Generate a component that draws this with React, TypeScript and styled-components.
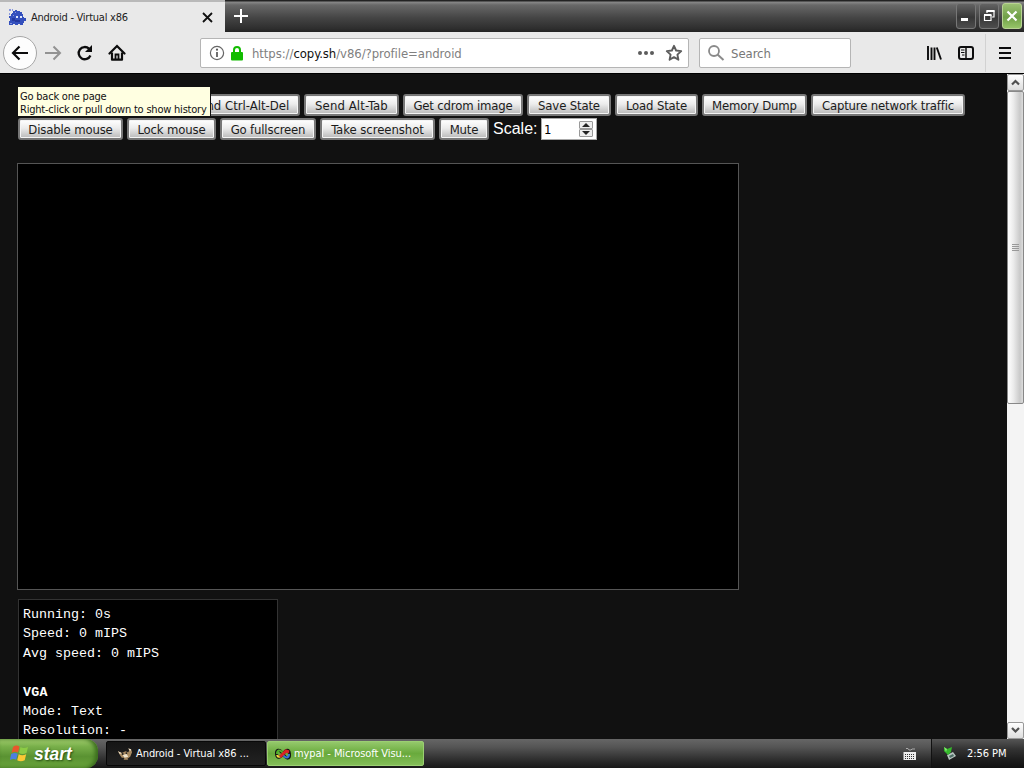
import React, { ReactElement, ReactNode } from "react";
import styled, { createGlobalStyle } from "styled-components";

const UI_FONT = '"DejaVu Sans Condensed", "DejaVu Sans", "Noto Sans", sans-serif';

interface ActionButton {
  label: string;
  width: number;
  tracking?: number;
}

const KEY_ACTIONS: readonly ActionButton[] = [
  { label: "Send Ctrl-Alt-Del", width: 119, tracking: 0 },
  { label: "Send Alt-Tab", width: 95, tracking: 0.1 },
  { label: "Get cdrom image", width: 120 },
  { label: "Save State", width: 84 },
  { label: "Load State", width: 83 },
  { label: "Memory Dump", width: 105 },
  { label: "Capture network traffic", width: 154 },
];

const SCREEN_ACTIONS: readonly ActionButton[] = [
  { label: "Disable mouse", width: 105 },
  { label: "Lock mouse", width: 89 },
  { label: "Go fullscreen", width: 96 },
  { label: "Take screenshot", width: 115, tracking: -0.05 },
  { label: "Mute", width: 50 },
];

const TitleBar = (): ReactElement => (
  <TitleBarContainer>
    <Tab>
      <FaviconIcon />
      <TabTitle>Android - Virtual x86</TabTitle>
      <svg width="11" height="11" viewBox="0 0 11 11">
        <path d="M1 1l9 9M10 1l-9 9" stroke="#111" strokeWidth="1.8" />
      </svg>
    </Tab>
    <NewTab>
      <svg width="14" height="14" viewBox="0 0 14 14">
        <path d="M7 0v14M0 7h14" stroke="#fff" strokeWidth="2" />
      </svg>
    </NewTab>
    <WindowControls>
      <WindowButton>
        <svg width="18" height="24" viewBox="0 0 18 24">
          <path d="M4 15.500h7" stroke="#fff" strokeWidth="3" />
        </svg>
      </WindowButton>
      <WindowButton>
        <svg width="18" height="24" viewBox="0 0 18 24" fill="none">
          <path d="M7 9V7h7v6h-2" stroke="#fff" strokeWidth="1.2" />
          <path d="M6.500 7h8" stroke="#fff" strokeWidth="2" />
          <path d="M4.500 11.500h6.500v5H4.500z" stroke="#fff" strokeWidth="1.2" />
          <path d="M4 11h7.500" stroke="#fff" strokeWidth="2" />
        </svg>
      </WindowButton>
      <WindowButton $close>
        <svg width="18" height="24" viewBox="0 0 18 24">
          <path
            d="M4.500 7.500l9 9M13.500 7.500l-9 9"
            stroke="#fff"
            strokeWidth="2.2"
          />
        </svg>
      </WindowButton>
    </WindowControls>
  </TitleBarContainer>
);

const FaviconIcon = (): ReactElement => (
  <svg width="17" height="17" viewBox="0 0 17 17">
    <path
      d="M3 4h1V2h2V1h2v1h3v1h2v2h1v3h1v1h2v3h-2v2h-1v2h-3v-1H9v1H6v-1H4v1H0v-4h1V9H0V7h2V5h1z"
      fill="#3450bd"
    />
    <path
      d="M0 0h2v2H0zM3 0h1v2H3zM0 4h1v2H0zM1 14h2v1H1zM6 3h1v1H6zM4 6h1v1H4z"
      fill="#8797df"
    />
    <path d="M3 9h3v3H3zM6 11h5v2H6z" fill="#2439a0" />
    <path d="M7 7h2v2H7zM11 7h2v2h-2z" fill="#dfe8ff" />
  </svg>
);

const BrowserToolbar = (): ReactElement => (
  <ToolbarContainer>
    <BackButton>
      <svg width="18" height="16" viewBox="0 0 18 16" fill="none">
        <path
          d="M17 8H2M8.500 1.500L2 8l6.500 6.500"
          stroke="#0c0c0d"
          strokeWidth="2.2"
        />
      </svg>
    </BackButton>
    <NavButton>
      <svg width="18" height="16" viewBox="0 0 18 16" fill="none">
        <path
          d="M1 8h15M9.500 1.500L16 8l-6.500 6.500"
          stroke="#929292"
          strokeWidth="2"
        />
      </svg>
    </NavButton>
    <NavButton>
      <svg width="18" height="18" viewBox="0 0 18 18" fill="none">
        <path
          d="M14.400 11.500A6.100 6.100 0 1 1 13 4.700"
          stroke="#0c0c0d"
          strokeWidth="2.3"
        />
        <path d="M16 1v7H9z" fill="#0c0c0d" />
      </svg>
    </NavButton>
    <NavButton>
      <svg width="18" height="18" viewBox="0 0 18 18" fill="none">
        <path
          d="M1.500 9.500L9 2l7.500 7.500"
          stroke="#0c0c0d"
          strokeWidth="2.200"
          strokeLinecap="round"
        />
        <path
          d="M4 8.500v7.200h10V8.500"
          stroke="#0c0c0d"
          strokeWidth="2.200"
          strokeLinejoin="round"
        />
        <path d="M7.500 16v-5.500h3V16" stroke="#0c0c0d" strokeWidth="1.8" />
      </svg>
    </NavButton>
    <AddressBar>
      <svg width="16" height="16" viewBox="0 0 16 16" fill="none">
        <circle cx="8" cy="8" r="6.600" stroke="#666" strokeWidth="1.200" />
        <path d="M8 7v5" stroke="#555" strokeWidth="1.700" />
        <circle cx="8" cy="4.700" r="1.100" fill="#555" />
      </svg>
      <LockIcon width="12" height="15" viewBox="0 0 12 15">
        <path
          d="M3 7V4a3 3 0 0 1 6 0v3"
          fill="none"
          stroke="#12bc00"
          strokeWidth="2"
        />
        <rect y="6" width="12" height="8.500" rx="1" fill="#12bc00" />
      </LockIcon>
      <Url>
        https://<strong>copy.sh</strong>/v86/?profile=android
      </Url>
      <svg width="18" height="6" viewBox="0 0 18 6" fill="#5c5c5c">
        <circle cx="3" cy="3" r="2" />
        <circle cx="9" cy="3" r="2" />
        <circle cx="15" cy="3" r="2" />
      </svg>
      <StarIcon width="18" height="18" viewBox="0 0 18 18" fill="none">
        <path
          d="M9 1.800l2.100 4.700 5.100.6-3.800 3.500 1 5.100L9 13.200l-4.400 2.500 1-5.100L1.800 7.100l5.100-.6z"
          stroke="#5c5c5c"
          strokeWidth="1.900"
          strokeLinejoin="round"
        />
      </StarIcon>
    </AddressBar>
    <SearchBar>
      <svg width="18" height="18" viewBox="0 0 18 18" fill="none">
        <circle cx="7" cy="7" r="5" stroke="#8a8a8a" strokeWidth="1.800" />
        <path d="M10.500 10.500L16.500 16" stroke="#8a8a8a" strokeWidth="2" />
      </svg>
      <SearchText>Search</SearchText>
    </SearchBar>
    <ToolbarActions>
      <svg width="16" height="16" viewBox="0 0 16 16">
        <path
          d="M2 1v14M5.500 2.500V15M8.500 2.500V15M10.800 2.500L15 14.500"
          stroke="#0c0c0d"
          strokeWidth="1.900"
        />
      </svg>
      <svg width="16" height="16" viewBox="0 0 16 16" fill="none">
        <rect
          x="1"
          y="2"
          width="14"
          height="12"
          rx="2"
          stroke="#0c0c0d"
          strokeWidth="2"
        />
        <path d="M8 2v12" stroke="#0c0c0d" strokeWidth="1.500" />
        <path d="M3 5h3.500M3 7.500h3.500M4 10h2.500" stroke="#0c0c0d" />
      </svg>
      <ToolbarSeparator />
      <svg width="12" height="14" viewBox="0 0 12 14">
        <path
          d="M0 2h12M0 7h12M0 12h12"
          stroke="#0c0c0d"
          strokeWidth="2"
        />
      </svg>
    </ToolbarActions>
  </ToolbarContainer>
);

const ButtonRow = ({
  actions,
  children,
}: {
  actions: readonly ActionButton[];
  children?: ReactNode;
}): ReactElement => (
  <Row>
    {actions.map(({ label, width, tracking }) => (
      <EmulatorButton key={label} $width={width} $tracking={tracking}>
        {label}
      </EmulatorButton>
    ))}
    {children}
  </Row>
);

const Chevron = ({ down = false }: { down?: boolean }): ReactElement => (
  <svg width="9" height="7" viewBox="0 0 9 7" fill="none">
    <path
      d={down ? "M1 1l3.500 3.500L8 1" : "M1 5.500L4.500 2 8 5.500"}
      stroke="#505050"
      strokeWidth="2.200"
    />
  </svg>
);

const Page = (): ReactElement => (
  <PageContainer>
    <PageContent>
      <Controls>
        <KeyRow>
          <ButtonRow actions={KEY_ACTIONS} />
        </KeyRow>
        <ButtonRow actions={SCREEN_ACTIONS}>
          <ScaleLabel>Scale:</ScaleLabel>
          <ScaleInput>
            1
            <Spinner>
              <SpinnerButton>
                <svg width="8" height="4" viewBox="0 0 8 4">
                  <path d="M0 4l4-4 4 4z" fill="#222" />
                </svg>
              </SpinnerButton>
              <SpinnerButton>
                <svg width="8" height="4" viewBox="0 0 8 4">
                  <path d="M0 0l4 4 4-4z" fill="#222" />
                </svg>
              </SpinnerButton>
            </Spinner>
          </ScaleInput>
        </ButtonRow>
      </Controls>
      <Screen />
      <Stats>
        <div>Running: 0s</div>
        <div>Speed: 0 mIPS</div>
        <div>Avg speed: 0 mIPS</div>
        <br />
        <StatsHeading>VGA</StatsHeading>
        <div>Mode: Text</div>
        <div>Resolution: -</div>
      </Stats>
    </PageContent>
    <Scrollbar>
      <ScrollButton>
        <Chevron />
      </ScrollButton>
      <ScrollThumb>
        <svg width="7" height="9" viewBox="0 0 7 9">
          <path d="M0 1.500h7M0 3.500h7M0 5.500h7M0 7.500h7" stroke="#999" />
        </svg>
      </ScrollThumb>
      <ScrollTrack />
      <ScrollButton>
        <Chevron down />
      </ScrollButton>
    </Scrollbar>
    <Tooltip>
      <div>Go back one page</div>
      <div>Right-click or pull down to show history</div>
    </Tooltip>
  </PageContainer>
);

const Taskbar = (): ReactElement => (
  <TaskbarContainer>
    <StartButton>
      <svg width="20" height="19" viewBox="0 0 20 19">
        <path d="M3 3q3-2.500 6.500-.5L8 8.500Q5 7 1.500 9z" fill="#e8582c" />
        <path d="M10.500 3q3 2 7.500 0L16.500 9q-4 2-7.500 0z" fill="#8ccb45" />
        <path d="M1.200 10Q4.500 8 7.700 9.700l-1.500 6Q3 14-.2 16z" fill="#4c7fe0" />
        <path d="M8.700 10.200q3.500 2 7.500 0l-1.500 6q-4 2-7.500 0z" fill="#fbc835" />
      </svg>
      <StartText>start</StartText>
    </StartButton>
    <TaskButton $width={160} $offset={8}>
      <svg width="15" height="14" viewBox="0 0 16 14">
        <path
          d="M0 4l4 2 4-2 3 1 1-2-1-2 3 1 1 3-2 5-3 2 1 1H6l1-2H4L2 8z"
          fill="#a98b62"
        />
        <path d="M0 4l4 2-2 1zM11 1l3 1-1 2zM5 8l4-1 2 3-4 1z" fill="#f0e4cd" />
        <circle cx="5" cy="7" r="1" fill="#222" />
        <circle cx="9" cy="6" r="1" fill="#222" />
      </svg>
      <TaskText>Android - Virtual x86 ...</TaskText>
    </TaskButton>
    <TaskButton $width={157} $offset={1} $highlighted>
      <svg width="16" height="14" viewBox="0 0 16 14" fill="none">
        <path
          d="M8 7C4 1 1 3 1.500 7s3 5 6.500 0 6-5 6.500 0S12 13 8 7z"
          stroke="#151515"
          strokeWidth="3"
        />
        <path d="M8 6C5 2 2 3 2 7" stroke="#4fb329" strokeWidth="2" />
        <path d="M8 8c3 4 6 3 6-1" stroke="#3774d6" strokeWidth="2" />
        <path d="M2 8c1 3 4 2 5-1" stroke="#f0dc38" strokeWidth="2" />
        <path d="M5 10l6-6 3 1" stroke="#d92222" strokeWidth="3" />
      </svg>
      <TaskText>mypal - Microsoft Visu...</TaskText>
    </TaskButton>
    <KeyboardIndicator>
      <svg width="14" height="14" viewBox="0 0 14 14" fill="none">
        <path d="M3 1.500h2l1 1.500h2l1-1h3" stroke="#aaa" />
        <path d="M.5 5h12.500v8H.5z" fill="#eee" />
        <path
          d="M2 7.500h10M2 9.500h10M2 11.500h10"
          stroke="#333"
          strokeDasharray="1 1"
        />
      </svg>
    </KeyboardIndicator>
    <Tray>
      <svg width="14" height="15" viewBox="0 0 14 15">
        <path d="M4 9l6-3 3 4-7 4z" fill="#b8c6c0" />
        <path d="M6 10l4-2 1 2-4 2z" fill="#4f6d66" />
        <path d="M1 1l3 2 5-2-1 5-3 3-4-4z" fill="#35b82c" />
        <path d="M1 1l3 2-1 3z" fill="#84e76d" />
      </svg>
      <Clock>2:56 PM</Clock>
    </Tray>
  </TaskbarContainer>
);

const App = (): ReactElement => (
  <Desktop>
    <GlobalStyle />
    <TitleBar />
    <BrowserToolbar />
    <Page />
    <Taskbar />
  </Desktop>
);

export default App;

const GlobalStyle = createGlobalStyle`
  * {
    box-sizing: border-box;
  }

  body {
    margin: 0;
    overflow: hidden;
  }

  svg {
    display: block;
    flex-shrink: 0;
  }
`;

const Desktop = styled.div`
  display: flex;
  flex-direction: column;
  width: 1024px;
  height: 768px;
  overflow: hidden;
  background: #111;
  font-family: ${UI_FONT};
  font-size: 11px;
  white-space: nowrap;
`;

const TitleBarContainer = styled.div`
  display: flex;
  height: 32px;
  flex-shrink: 0;
  background: linear-gradient(
    #222 0,
    #222 1px,
    #898989 2px,
    #686868 5px,
    #444 18px,
    #2d2d2d 29px,
    #222 32px
  );
`;

const Tab = styled.div`
  display: flex;
  align-items: center;
  width: 225px;
  padding: 0 12px 0 9px;
  border-top: 2px solid #b9b9b9;
  background: #e9e9e9;
`;

const TabTitle = styled.span`
  flex: 1;
  margin-left: 5px;
  color: #222;
  letter-spacing: -0.25px;
`;

const NewTab = styled.div`
  display: flex;
  align-items: center;
  flex: 1;
  padding-left: 9px;
`;

const WindowControls = styled.div`
  display: flex;
  gap: 3px;
  padding: 3px 2px 0 0;
`;

const WindowButton = styled.div<{ $close?: boolean }>`
  display: flex;
  align-items: center;
  justify-content: center;
  width: 20px;
  height: 26px;
  border: 1px solid ${(props) => (props.$close ? "#b8d393" : "#777")};
  border-radius: 3px;
  background: ${(props) =>
    props.$close
      ? "linear-gradient(#9cc174, #70a047 55%, #96c468)"
      : "linear-gradient(#636363, #373737 55%, #4d4d4d)"};
`;

const ToolbarContainer = styled.div`
  display: flex;
  align-items: center;
  height: 41px;
  flex-shrink: 0;
  padding: 1px 0 0 3px;
  background: #e9e9e9;
`;

const BackButton = styled.div`
  display: flex;
  align-items: center;
  justify-content: center;
  width: 34px;
  height: 34px;
  border: 1px solid #a6a6a6;
  border-radius: 50%;
  background: #fdfdfd;
`;

const NavButton = styled.div`
  display: flex;
  align-items: center;
  justify-content: center;
  width: 32px;
  height: 32px;
`;

const AddressBar = styled.div`
  display: flex;
  align-items: center;
  width: 489px;
  height: 30px;
  margin-left: 67px;
  padding: 0 5px 0 8px;
  border: 1px solid #b5b5b5;
  border-radius: 2px;
  background: #fff;
`;

const LockIcon = styled.svg`
  margin-left: 6px;
`;

const Url = styled.span`
  flex: 1;
  margin-left: 9px;
  color: #808080;
  font-size: 13px;
  letter-spacing: -0.07px;

  strong {
    color: #111;
    font-weight: normal;
  }
`;

const StarIcon = styled.svg`
  margin-left: 10px;
`;

const SearchBar = styled.div`
  display: flex;
  align-items: center;
  width: 152px;
  height: 30px;
  margin-left: 10px;
  padding-left: 7px;
  border: 1px solid #b5b5b5;
  border-radius: 2px;
  background: #fff;
`;

const SearchText = styled.span`
  margin-left: 6px;
  color: #777;
  font-size: 13px;
  letter-spacing: -0.05px;
`;

const ToolbarActions = styled.div`
  display: flex;
  align-items: center;
  flex: 1;
  justify-content: flex-end;
  gap: 16px;
  padding-right: 13px;
`;

const ToolbarSeparator = styled.div`
  width: 1px;
  height: 38px;
  margin-left: -5px;
  margin-right: -3px;
  background: #d2d2d2;
`;

const PageContainer = styled.div`
  display: flex;
  position: relative;
  flex: 1;
  min-height: 0;
  overflow: hidden;
  border-top: 1px solid #000;
`;

const PageContent = styled.div`
  flex: 1;
  padding: 20px 0 0 17px;
`;

const Controls = styled.div`
  display: flex;
  flex-direction: column;
  gap: 2px;
  padding-left: 1px;
`;

const Row = styled.div`
  display: flex;
  gap: 4px;
`;

const KeyRow = styled.div`
  padding-left: 163px;
`;

const EmulatorButton = styled.button<{ $width: number; $tracking?: number }>`
  width: ${(props) => props.$width}px;
  height: 22px;
  flex-shrink: 0;
  padding: 1px 0 0;
  border: 2px solid #777;
  border-radius: 3px;
  background: linear-gradient(#fff, #ececec 45%, #b9b9b9);
  box-shadow: inset 0 0 0 1px #f4f4f4;
  color: #1b1b1b;
  font-family: inherit;
  font-size: 13px;
  letter-spacing: ${(props) => props.$tracking ?? -0.16}px;
  white-space: nowrap;
`;

const ScaleLabel = styled.span`
  width: 44px;
  color: #fff;
  font-family: "Liberation Sans", Arial, sans-serif;
  font-size: 16px;
  line-height: 21px;
`;

const ScaleInput = styled.div`
  display: flex;
  align-items: center;
  justify-content: space-between;
  width: 56px;
  height: 22px;
  padding: 0 3px 0 2px;
  border: 1px solid #aaa;
  background: #fff;
  font-size: 13px;
`;

const Spinner = styled.div`
  display: flex;
  flex-direction: column;
`;

const SpinnerButton = styled.div`
  display: flex;
  align-items: center;
  justify-content: center;
  width: 14px;
  height: 8px;
  border: 1px solid #999;
  border-radius: 1px;
  background: #eee;
`;

const Screen = styled.div`
  width: 722px;
  height: 427px;
  margin-top: 23px;
  border: 1px solid #555;
  background: #000;
`;

const Stats = styled.div`
  width: 260px;
  height: 200px;
  margin: 9px 0 0 1px;
  padding: 5px 4px;
  border: 1px solid #333;
  background: #000;
  color: #fff;
  font-family: "Liberation Mono", "Courier New", monospace;
  font-size: 13.33px;
  line-height: 19.4px;
`;

const StatsHeading = styled.div`
  font-weight: bold;
  letter-spacing: 0.2px;
`;

const Scrollbar = styled.div`
  display: flex;
  flex-direction: column;
  width: 17px;
  background: #f4f4f4;
`;

const ScrollButton = styled.div`
  display: flex;
  align-items: center;
  justify-content: center;
  height: 17px;
  flex-shrink: 0;
  border: 1px solid #999;
  border-radius: 2px;
  background: linear-gradient(#fff, #ddd);
`;

const ScrollThumb = styled.div`
  display: flex;
  align-items: center;
  justify-content: center;
  height: 313px;
  border: 1px solid #888;
  border-radius: 2px;
  background: linear-gradient(90deg, #fff, #ececec 35%, #c9c9c9 80%, #ddd);
`;

const ScrollTrack = styled.div`
  flex: 1;
`;

// Lies over the page, just below the back button
const Tooltip = styled.div`
  position: absolute;
  left: 18px;
  top: 12px;
  width: 193px;
  height: 31px;
  padding: 3px 2px;
  border: 1px solid #111;
  border-left: 0;
  background: #ffffe1;
  color: #111;
  line-height: 13px;
  letter-spacing: -0.21px;
`;

const TaskbarContainer = styled.div`
  display: flex;
  height: 29px;
  flex-shrink: 0;
  background: linear-gradient(#666, #555 8px, #303030 20px, #181818);
`;

const StartButton = styled.div`
  display: flex;
  align-items: center;
  width: 98px;
  padding-left: 10px;
  border-radius: 0 12px 12px 0;
  background: linear-gradient(#a5d071, #79b04b 25%, #5a9232 60%, #6ba53c);
  box-shadow: inset -3px 0 4px #396b1c;
`;

const StartText = styled.span`
  margin-left: 4px;
  color: #fff;
  font-family: "Liberation Sans", Arial, sans-serif;
  font-size: 17.5px;
  font-style: italic;
  font-weight: bold;
  line-height: 24px;
  text-shadow: 1px 1px 2px #244c12;
`;

const TaskButton = styled.div<{
  $width: number;
  $offset: number;
  $highlighted?: boolean;
}>`
  display: flex;
  align-items: center;
  width: ${(props) => props.$width}px;
  height: 25px;
  margin: 2px 0 0 ${(props) => props.$offset}px;
  padding-left: ${(props) => (props.$highlighted ? 7 : 11)}px;
  border: 1px solid ${(props) => (props.$highlighted ? "#9bcf72" : "#080808")};
  border-radius: 2px;
  background: ${(props) =>
    props.$highlighted
      ? "linear-gradient(#94c86b, #69aa3c 50%, #83bd58)"
      : "linear-gradient(#151515, #222)"};
`;

const TaskText = styled.span`
  margin-left: 3px;
  color: #fff;
  letter-spacing: -0.07px;
`;

const KeyboardIndicator = styled.div`
  display: flex;
  align-items: center;
  flex: 1;
  justify-content: flex-end;
  padding-right: 14px;
`;

const Tray = styled.div`
  display: flex;
  align-items: center;
  width: 93px;
  padding-left: 11px;
  border-left: 1px solid #111;
  background: linear-gradient(#555, #333 10px, #1e1e1e 20px, #111);
`;

const Clock = styled.span`
  margin-left: 10px;
  color: #fff;
  letter-spacing: -0.05px;
`;
